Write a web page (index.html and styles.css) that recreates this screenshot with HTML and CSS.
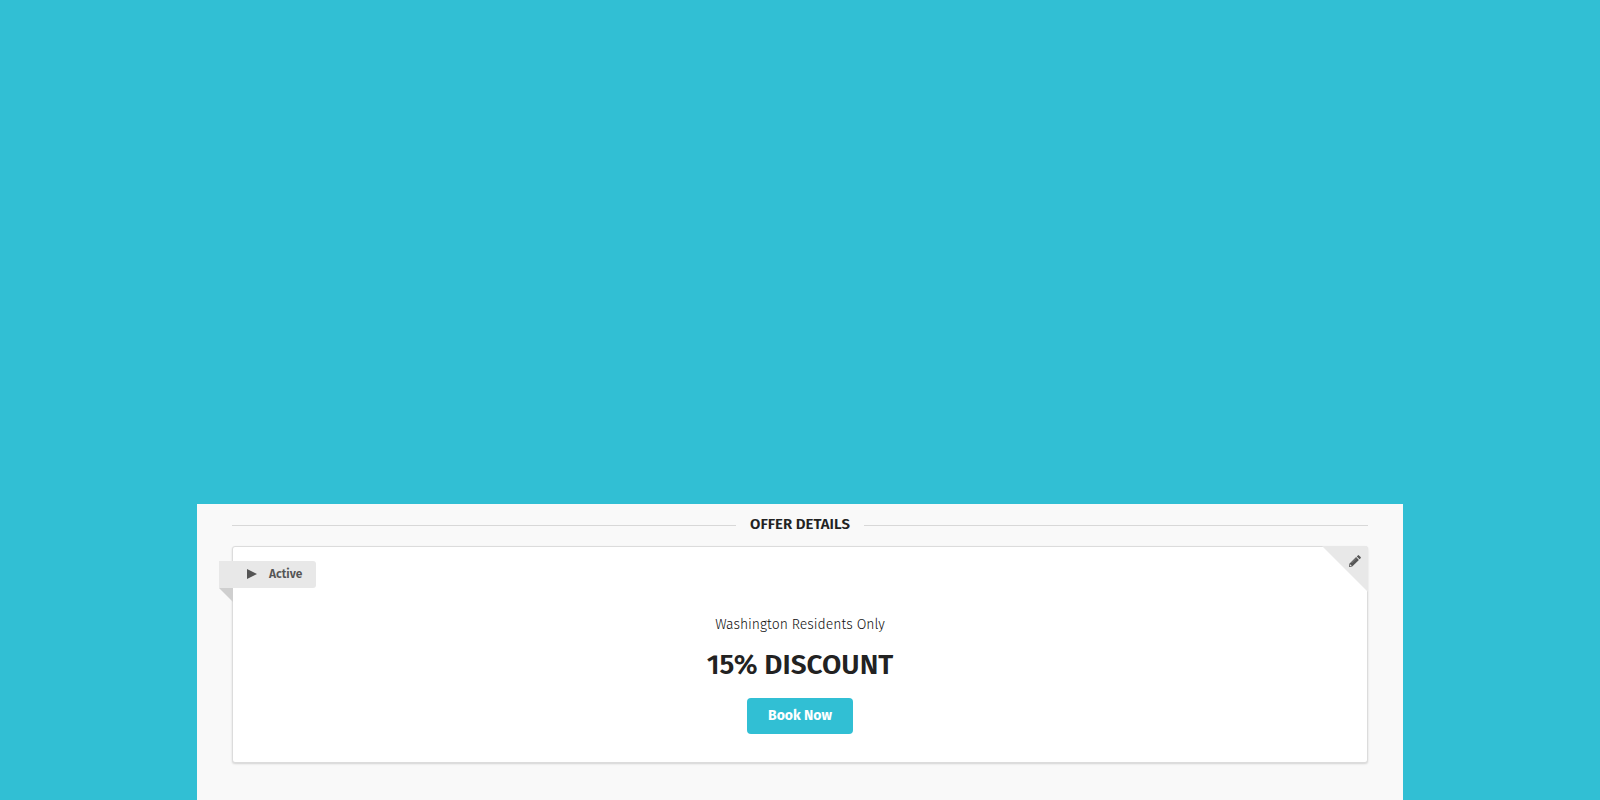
FILE: index.html
```html
<!DOCTYPE html>
<html lang="en">
<head>
    <meta charset="UTF-8">
    <meta name="viewport" content="width=device-width, initial-scale=1.0">
    <title>Offer Details</title>
    <link rel="stylesheet" href="styles.css">
</head>
<body>
    <main class="panel">
        <h2 class="section-title">Offer Details</h2>
        <section class="offer-card">
            <div class="ribbon">
                <svg class="play-icon" viewBox="0 0 10 10" aria-hidden="true"><path d="M0 0L10 5L0 10Z"/></svg>
                <span>Active</span>
            </div>
            <button type="button" class="edit-corner" aria-label="Edit offer">
                <svg class="pencil-icon" viewBox="0 0 12 12" aria-hidden="true">
                    <path d="M7.1 2.1L9.9 4.9L3.2 11.6L0 12L0.4 8.8Z"/>
                    <path d="M7.8 1.4L8.8 0.4Q9.4 -0.2 10 0.4L11.6 2Q12.2 2.6 11.6 3.2L10.6 4.2Z"/>
                    <path class="pencil-light" d="M1.2 9.2L2.8 10.8L1.2 11.1L0.9 10.8Z"/>
                    <path class="pencil-shine" d="M2.5 8L7.2 3.3"/>
                </svg>
            </button>
            <p class="offer-note">Washington Residents Only</p>
            <h1 class="offer-title">15% DISCOUNT</h1>
            <button type="button" class="book-button">Book Now</button>
        </section>
    </main>
</body>
</html>
```
FILE: styles.css
```css
/* General Styles */
* {
    box-sizing: border-box;
}
body {
    display: flex;
    flex-direction: column;
    min-height: 100vh;
    margin: 0;
    padding-top: 63vh;
    background-color: #31bfd4;
    color: #222;
    font-family: "Fira Sans", "Noto Sans", sans-serif;
}
.panel {
    flex: 1;
    width: 100%;
    max-width: 1206px;
    margin: 0 auto;
    padding: 10px 35px 36px;
    background-color: #f9f9f9;
}
/* Section Title */
.section-title {
    display: flex;
    align-items: center;
    gap: 14px;
    margin: 0 0 12px;
    font-size: 15px;
    font-weight: 600;
    line-height: 20px;
    text-transform: uppercase;
}
.section-title::before,
.section-title::after {
    content: "";
    flex: 1;
    height: 1px;
    margin-top: 2px;
    background-color: #d8d8d8;
}
/* Offer Card */
.offer-card {
    position: relative;
    display: flex;
    flex-direction: column;
    align-items: center;
    padding: 66px 20px 28px;
    border: 1px solid #dcdcdc;
    border-radius: 3px;
    background-color: #fff;
    box-shadow: 0 1px 2px rgba(0, 0, 0, 0.15);
}
.offer-note {
    margin: 0;
    color: #111;
    font-size: 14px;
    font-weight: 300;
    line-height: 24px;
}
.offer-title {
    margin: 10px 0 15px;
    font-size: 28px;
    font-weight: 600;
    line-height: 36px;
}
.book-button {
    height: 36px;
    padding: 0 21px 2px;
    border: none;
    border-radius: 4px;
    background-color: #31bfd4;
    color: #fff;
    cursor: pointer;
    font-family: inherit;
    font-size: 14px;
    font-weight: 700;
}
/* Status Ribbon */
.ribbon {
    position: absolute;
    top: 14px;
    left: -14px;
    display: flex;
    align-items: center;
    gap: 12px;
    height: 27px;
    padding: 0 14px 2px 28px;
    border-radius: 0 3px 3px 0;
    background-color: #e8e8e8;
    color: #555;
    font-size: 12px;
    font-weight: 600;
}
.ribbon::after {
    content: "";
    position: absolute;
    top: 100%;
    left: 0;
    width: 14px;
    height: 14px;
    background-color: #cfcfcf;
    clip-path: polygon(0 0, 100% 0, 100% 100%);
}
.play-icon {
    width: 10px;
    height: 10px;
    fill: #555;
}
/* Edit Corner */
.edit-corner {
    position: absolute;
    top: -1px;
    right: -1px;
    display: flex;
    justify-content: flex-end;
    align-items: flex-start;
    width: 46px;
    height: 46px;
    padding: 9px 7px;
    border: none;
    border-radius: 0 3px 0 0;
    background-color: #e8e8e8;
    clip-path: polygon(0 0, 100% 0, 100% 100%);
    cursor: pointer;
}
.pencil-icon {
    width: 12px;
    height: 12px;
    fill: #555;
}
.pencil-light {
    fill: #e8e8e8;
}
.pencil-shine {
    fill: none;
    stroke: #999;
    stroke-width: 0.6;
}
```
